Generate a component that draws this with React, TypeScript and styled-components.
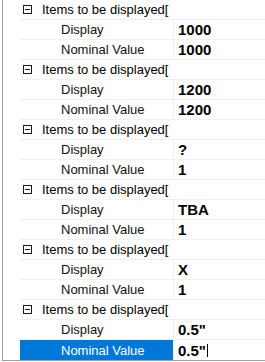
import * as React from "react";
import styled, { createGlobalStyle } from "styled-components";

const GlobalStyle = createGlobalStyle`
  html, body {
    margin: 0;
    padding: 0;
    background: #ffffff;
  }
  body {
    font-family: "Liberation Sans", Arial, sans-serif;
    font-size: 13px;
    color: #000;
  }
`;

const Page = styled.div`
  padding-left: 2px;
  width: 263px;
`;

const Grid = styled.div`
  border-left: 1px solid #a0a0a0;
  border-bottom: 1px solid #a0a0a0;
  display: flex;
  flex-direction: column;
`;

const Row = styled.div`
  display: flex;
  height: 20px;
`;

const Margin = styled.div`
  width: 17px;
  flex: none;
  background: #ffffff;
`;

const Body = styled.div<{ $last?: boolean }>`
  flex: 1;
  display: flex;
  border-bottom: ${(p) => (p.$last ? "none" : "1px solid #f0f0f0")};
  min-width: 0;
`;

const GroupCell = styled.div`
  display: flex;
  align-items: center;
  gap: 10px;
  padding-left: 3px;
  white-space: nowrap;
`;

const Expander = styled.span`
  width: 7px;
  height: 7px;
  border: 1px solid #1a1a1a;
  display: flex;
  align-items: center;
  justify-content: center;
  flex: none;
  &::after {
    content: "";
    width: 5px;
    height: 1px;
    background: #1a1a1a;
  }
`;

const LabelCell = styled.div<{ $selected?: boolean }>`
  width: 153px;
  flex: none;
  display: flex;
  align-items: center;
  padding-left: 41px;
  box-sizing: border-box;
  white-space: nowrap;
  background: ${(p) => (p.$selected ? "#0078d7" : "transparent")};
  color: ${(p) => (p.$selected ? "#ffffff" : "#111")};
`;

const Divider = styled.div`
  width: 1px;
  flex: none;
  background: #f0f0f0;
`;

const ValueCell = styled.div`
  flex: 1;
  display: flex;
  align-items: center;
  padding-left: 4px;
  font-weight: bold;
  font-size: 15px;
  white-space: nowrap;
`;

const Caret = styled.span`
  display: inline-block;
  width: 1px;
  height: 13px;
  background: #000;
  margin-left: 1px;
`;

type Item = { display: string; nominal: string };

const items: Item[] = [
  { display: "1000", nominal: "1000" },
  { display: "1200", nominal: "1200" },
  { display: "?", nominal: "1" },
  { display: "TBA", nominal: "1" },
  { display: "X", nominal: "1" },
  { display: "0.5\"", nominal: "0.5\"" },
];

const PropRow = ({
  label,
  value,
  selected,
  last,
}: {
  label: string;
  value: string;
  selected?: boolean;
  last?: boolean;
}) => (
  <Row>
    <Margin />
    <Body $last={last}>
      <LabelCell $selected={selected}>{label}</LabelCell>
      <Divider />
      <ValueCell>
        {value}
        {selected ? <Caret /> : null}
      </ValueCell>
    </Body>
  </Row>
);

export default function App() {
  return (
    <Page>
      <GlobalStyle />
      <Grid>
        {items.map((item, i) => {
          const lastGroup = i === items.length - 1;
          return (
            <React.Fragment key={i}>
              <Row>
                <Margin />
                <Body>
                  <GroupCell>
                    <Expander />
                    Items to be displayed[
                  </GroupCell>
                </Body>
              </Row>
              <PropRow label="Display" value={item.display} />
              <PropRow
                label="Nominal Value"
                value={item.nominal}
                selected={lastGroup}
                last={lastGroup}
              />
            </React.Fragment>
          );
        })}
      </Grid>
    </Page>
  );
}
